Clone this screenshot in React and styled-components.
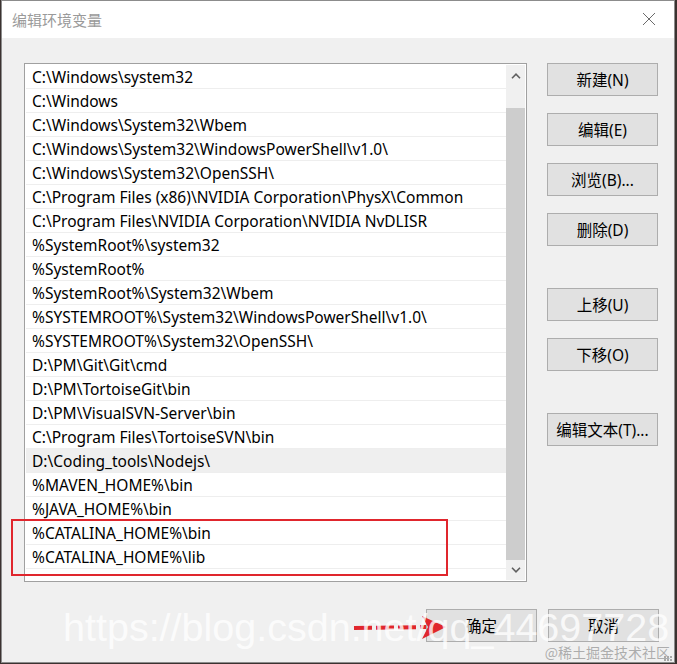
import React from 'react';
import styled, { createGlobalStyle } from 'styled-components';

const GlobalStyle = createGlobalStyle`
  body {
    margin: 0;
    background: #3b3230;
  }
`;

const paths = [
  'C:\\Windows\\system32',
  'C:\\Windows',
  'C:\\Windows\\System32\\Wbem',
  'C:\\Windows\\System32\\WindowsPowerShell\\v1.0\\',
  'C:\\Windows\\System32\\OpenSSH\\',
  'C:\\Program Files (x86)\\NVIDIA Corporation\\PhysX\\Common',
  'C:\\Program Files\\NVIDIA Corporation\\NVIDIA NvDLISR',
  '%SystemRoot%\\system32',
  '%SystemRoot%',
  '%SystemRoot%\\System32\\Wbem',
  '%SYSTEMROOT%\\System32\\WindowsPowerShell\\v1.0\\',
  '%SYSTEMROOT%\\System32\\OpenSSH\\',
  'D:\\PM\\Git\\Git\\cmd',
  'D:\\PM\\TortoiseGit\\bin',
  'D:\\PM\\VisualSVN-Server\\bin',
  'C:\\Program Files\\TortoiseSVN\\bin',
  'D:\\Coding_tools\\Nodejs\\',
  '%MAVEN_HOME%\\bin',
  '%JAVA_HOME%\\bin',
  '%CATALINA_HOME%\\bin',
  '%CATALINA_HOME%\\lib',
];

const sideButtons = [
  { label: '新建(N)', gap: 0 },
  { label: '编辑(E)', gap: 17 },
  { label: '浏览(B)...', gap: 17 },
  { label: '删除(D)', gap: 17 },
  { label: '上移(U)', gap: 42 },
  { label: '下移(O)', gap: 17 },
  { label: '编辑文本(T)...', gap: 42 },
];

const App = () => {
  return (
    <>
      <GlobalStyle />
      <Window>
        <TitleBar>
          <Title>编辑环境变量</Title>
          <CloseButton>
            <svg width="14" height="14" viewBox="0 0 14 14">
              <path d="M1 1 L13 13 M13 1 L1 13" stroke="#6b6b6b" strokeWidth="1" fill="none" />
            </svg>
          </CloseButton>
        </TitleBar>

        <Body>
          <ListBox>
            <Rows>
              {paths.map((p, i) => (
                <Row key={i} $hover={i === 16}>{p}</Row>
              ))}
            </Rows>
            <Scrollbar>
              <ArrowButton $top>
                <svg width="10" height="6" viewBox="0 0 10 6">
                  <path d="M1 5.2 L5 1.2 L9 5.2" stroke="#606060" strokeWidth="1.6" fill="none" />
                </svg>
              </ArrowButton>
              <Track>
                <Thumb />
              </Track>
              <ArrowButton>
                <svg width="10" height="6" viewBox="0 0 10 6">
                  <path d="M1 0.8 L5 4.8 L9 0.8" stroke="#606060" strokeWidth="1.6" fill="none" />
                </svg>
              </ArrowButton>
            </Scrollbar>
          </ListBox>

          <ButtonColumn>
            {sideButtons.map((b) => (
              <Button key={b.label} $gap={b.gap}>{b.label}</Button>
            ))}
          </ButtonColumn>
        </Body>

        <Footer>
          <Button>确定</Button>
          <Button>取消</Button>
        </Footer>

        <Highlight />
        <Arrow width="100" height="30" viewBox="0 0 100 30">
          <path d="M2 16 L74 15" stroke="#e0262d" strokeWidth="4" fill="none" strokeDasharray="18 4" />
          <path d="M70 4 L94 15 L70 27 L76 15 Z" fill="#e0262d" />
        </Arrow>
        <Watermark>https://blog.csdn.net/qq_44697728</Watermark>
        <JuejinMark>@稀土掘金技术社区</JuejinMark>
        <Grip>
          {Array.from({ length: 6 }).map((_, i) => <Dot key={i} />)}
        </Grip>
      </Window>
    </>
  );
};

const Window = styled.div`
  position: relative;
  box-sizing: border-box;
  width: 674px;
  height: 663px;
  margin-left: 1px;
  border: 1px solid #8c8c8c;
  background: #f0f0f0;
  display: flex;
  flex-direction: column;
  font-family: "Noto Sans", "Noto Sans CJK SC", sans-serif;
  font-size: 15.5px;
  color: #000;
  overflow: hidden;
`;

const TitleBar = styled.div`
  height: 37px;
  flex-shrink: 0;
  background: #fff;
  display: flex;
  align-items: center;
  justify-content: space-between;
  padding-left: 10px;
`;

const Title = styled.div`
  font-family: "Noto Sans CJK SC", sans-serif;
  font-size: 15px;
  color: #9a9a9a;
  margin-top: -1px;
`;

const CloseButton = styled.div`
  width: 46px;
  height: 37px;
  display: flex;
  align-items: center;
  justify-content: center;
  margin-right: 2px;
  margin-top: -1px;
`;

const Body = styled.div`
  display: flex;
  gap: 20px;
  padding: 25px 15px 0 22px;
`;

const ListBox = styled.div`
  box-sizing: border-box;
  width: 503px;
  height: 519px;
  border: 1px solid #a0a0a0;
  background: #fff;
  padding: 1px;
  display: flex;
`;

const Rows = styled.div`
  flex: 1;
  display: flex;
  flex-direction: column;
`;

const Row = styled.div`
  box-sizing: border-box;
  height: 24px;
  line-height: 24px;
  padding-left: 6px;
  border-bottom: 1px solid #eeeeee;
  background: ${(p) => (p.$hover ? '#efefef' : '#fff')};
  white-space: nowrap;
`;

const Scrollbar = styled.div`
  width: 19px;
  background: #f0f0f0;
  display: flex;
  flex-direction: column;
`;

const ArrowButton = styled.div`
  height: ${(p) => (p.$top ? '22px' : '20px')};
  display: flex;
  align-items: center;
  justify-content: center;
`;

const Track = styled.div`
  flex: 1;
  padding-top: 21px;
  display: flex;
`;

const Thumb = styled.div`
  flex: 1;
  background: #cdcdcd;
`;

const ButtonColumn = styled.div`
  display: flex;
  flex-direction: column;
`;

const Button = styled.div`
  box-sizing: border-box;
  width: 111px;
  height: 33px;
  margin-top: ${(p) => (p.$gap || 0)}px;
  border: 1px solid #adadad;
  background: #e1e1e1;
  display: flex;
  align-items: center;
  justify-content: center;
  font-family: "Noto Sans", "Noto Sans CJK SC", sans-serif;
  font-size: 15.5px;
  white-space: nowrap;
`;

const Footer = styled.div`
  display: flex;
  justify-content: flex-end;
  gap: 11px;
  padding: 0 15px;
  margin-top: 27px;
`;

const Highlight = styled.div`
  position: absolute;
  left: 9px;
  top: 518px;
  width: 437px;
  height: 57px;
  box-sizing: border-box;
  border: 2px solid #e0262d;
`;

const Arrow = styled.svg`
  position: absolute;
  left: 350px;
  top: 611px;
`;

const Watermark = styled.div`
  position: absolute;
  left: 61px;
  top: 602px;
  font-family: "Liberation Sans", Arial, sans-serif;
  font-size: 39.5px;
  line-height: 48px;
  color: rgba(255, 255, 255, 0.78);
  white-space: nowrap;
  pointer-events: none;
`;

const JuejinMark = styled.div`
  position: absolute;
  right: 4px;
  bottom: 1px;
  font-family: "Noto Sans CJK SC", sans-serif;
  font-size: 14px;
  line-height: 17px;
  color: rgba(150, 150, 150, 0.75);
  white-space: nowrap;
`;

const Grip = styled.div`
  position: absolute;
  right: 1px;
  bottom: 1px;
  width: 9px;
  display: grid;
  grid-template-columns: repeat(3, 2px);
  gap: 1px;
`;

const Dot = styled.div`
  width: 2px;
  height: 2px;
  background: #a8a8a8;
`;

export default App;
